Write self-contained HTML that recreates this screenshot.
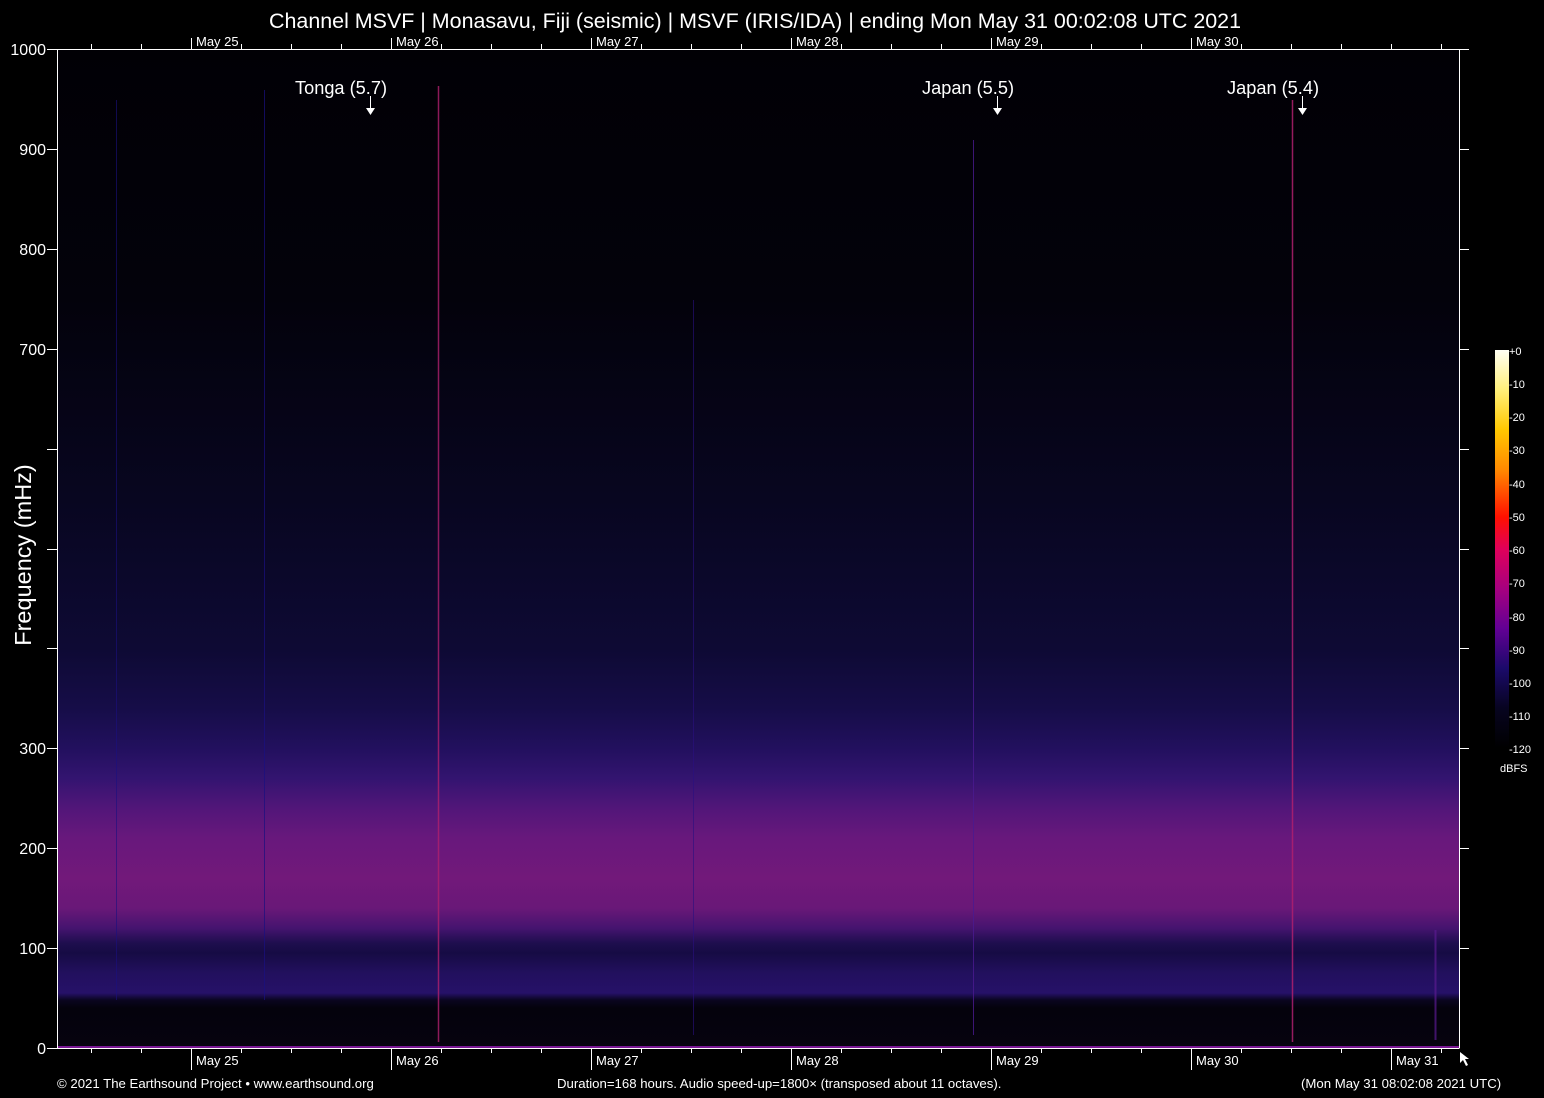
<!DOCTYPE html>
<html><head><meta charset="utf-8"><style>
html,body{margin:0;padding:0;background:#000;width:1544px;height:1098px;overflow:hidden}
svg{display:block}
text{font-family:"Liberation Sans",Arial,sans-serif;fill:#fff}
</style></head><body>
<svg width="1544" height="1098" viewBox="0 0 1544 1098" xmlns="http://www.w3.org/2000/svg">
<defs>
<linearGradient id="spec" x1="0" y1="49" x2="0" y2="1048" gradientUnits="userSpaceOnUse">
<stop offset="0" stop-color="#010005"/>
<stop offset="0.25" stop-color="#03020b"/>
<stop offset="0.45" stop-color="#080620"/>
<stop offset="0.6" stop-color="#0e0a34"/>
<stop offset="0.66" stop-color="#160d48"/>
<stop offset="0.7" stop-color="#22105e"/>
<stop offset="0.73" stop-color="#331470"/>
<stop offset="0.76" stop-color="#521679"/>
<stop offset="0.79" stop-color="#68187c"/>
<stop offset="0.83" stop-color="#72197a"/>
<stop offset="0.86" stop-color="#691878"/>
<stop offset="0.88" stop-color="#45146f"/>
<stop offset="0.895" stop-color="#1e0e4e"/>
<stop offset="0.905" stop-color="#160b44"/>
<stop offset="0.925" stop-color="#22105e"/>
<stop offset="0.945" stop-color="#261168"/>
<stop offset="0.952" stop-color="#0a0520"/>
<stop offset="0.96" stop-color="#04020c"/>
<stop offset="1" stop-color="#06030f"/>
</linearGradient>
<linearGradient id="cb" x1="0" y1="350" x2="0" y2="748" gradientUnits="userSpaceOnUse">
<stop offset="0" stop-color="#fffff4"/>
<stop offset="0.1" stop-color="#fff07a"/>
<stop offset="0.2" stop-color="#ffc800"/>
<stop offset="0.3" stop-color="#ff8a00"/>
<stop offset="0.42" stop-color="#ff1000"/>
<stop offset="0.5" stop-color="#e0005a"/>
<stop offset="0.6" stop-color="#a6007f"/>
<stop offset="0.7" stop-color="#620094"/>
<stop offset="0.8" stop-color="#1b0a6a"/>
<stop offset="0.9" stop-color="#070420"/>
<stop offset="1" stop-color="#000000"/>
</linearGradient>
</defs>
<rect x="57" y="49" width="1402" height="999" fill="url(#spec)"/>
<!-- event lines -->
<line x1="438.5" y1="86" x2="438.5" y2="1042" stroke="#b0206e" stroke-width="1.5" opacity="0.8"/>
<line x1="1292.5" y1="100" x2="1292.5" y2="1042" stroke="#b0206e" stroke-width="1.5" opacity="0.85"/>
<line x1="973.5" y1="140" x2="973.5" y2="1035" stroke="#4a1a90" stroke-width="1" opacity="0.8"/>
<line x1="264.5" y1="90" x2="264.5" y2="1000" stroke="#1a1080" stroke-width="1" opacity="0.7"/>
<line x1="116.5" y1="100" x2="116.5" y2="1000" stroke="#1a1080" stroke-width="1" opacity="0.6"/>
<line x1="693.5" y1="300" x2="693.5" y2="1035" stroke="#2a1080" stroke-width="1" opacity="0.6"/>
<line x1="1435.5" y1="930" x2="1435.5" y2="1040" stroke="#5a1a90" stroke-width="2" opacity="0.7"/>
<line x1="57" y1="1047" x2="1459" y2="1047" stroke="#a020c0" stroke-width="1.5"/>
<!-- axes -->
<g stroke="#fff" stroke-width="1" fill="none">
<path d="M57.5 49V1048.5M1459.5 49V1048.5M57 49.5H1469M47 1048.5H1459"/>
<path d="M47 948.5h10M47 848.5h10M47 748.5h10M47 648.5h10M47 549.5h10M47 449.5h10M47 349.5h10M47 249.5h10M47 149.5h10M47 49.5h10"/>
<path d="M1459 948.5h10M1459 848.5h10M1459 748.5h10M1459 648.5h10M1459 549.5h10M1459 449.5h10M1459 349.5h10M1459 249.5h10M1459 149.5h10"/>
<path d="M91.5 1048v5M141.5 1048v5M241.5 1048v5M291.5 1048v5M341.5 1048v5M441.5 1048v5M491.5 1048v5M541.5 1048v5M641.5 1048v5M691.5 1048v5M741.5 1048v5M841.5 1048v5M891.5 1048v5M941.5 1048v5M1041.5 1048v5M1091.5 1048v5M1141.5 1048v5M1241.5 1048v5M1291.5 1048v5M1341.5 1048v5M1441.5 1048v5"/>
<path d="M191.5 1048v22M391.5 1048v22M591.5 1048v22M791.5 1048v22M991.5 1048v22M1191.5 1048v22M1391.5 1048v22"/>
<path d="M91.5 49v-5M141.5 49v-5M241.5 49v-5M291.5 49v-5M341.5 49v-5M441.5 49v-5M491.5 49v-5M541.5 49v-5M641.5 49v-5M691.5 49v-5M741.5 49v-5M841.5 49v-5M891.5 49v-5M941.5 49v-5M1041.5 49v-5M1091.5 49v-5M1141.5 49v-5M1241.5 49v-5M1291.5 49v-5M1341.5 49v-5M1391.5 49v-5M1441.5 49v-5"/>
<path d="M191.5 49v-11M391.5 49v-11M591.5 49v-11M791.5 49v-11M991.5 49v-11M1191.5 49v-11"/>
<path d="M370.5 96v12M997.5 96v12M1302.5 96v12"/>
</g>
<g fill="#fff">
<path d="M366 108h9l-4.5 7z"/><path d="M993 108h9l-4.5 7z"/><path d="M1298 108h9l-4.5 7z"/>
<path d="M1460 1052l0 11 3-3 3 6 2-1-3-6 4 0z"/>
</g>
<text x="755" y="28" font-size="21.5" text-anchor="middle" textLength="972" lengthAdjust="spacingAndGlyphs">Channel MSVF | Monasavu, Fiji (seismic) | MSVF (IRIS/IDA) | ending Mon May 31 00:02:08 UTC 2021</text>
<g font-size="16" text-anchor="end">
<text x="46" y="55">1000</text><text x="46" y="155">900</text><text x="46" y="255">800</text><text x="46" y="355">700</text>
<text x="46" y="754">300</text><text x="46" y="854">200</text><text x="46" y="954">100</text><text x="46" y="1054">0</text>
</g>
<text transform="translate(31,555) rotate(-90)" font-size="23.5" text-anchor="middle">Frequency (mHz)</text>
<g font-size="13">
<text x="196" y="46">May 25</text><text x="396" y="46">May 26</text><text x="596" y="46">May 27</text><text x="796" y="46">May 28</text><text x="996" y="46">May 29</text><text x="1196" y="46">May 30</text>
<text x="196" y="1065">May 25</text><text x="396" y="1065">May 26</text><text x="596" y="1065">May 27</text><text x="796" y="1065">May 28</text><text x="996" y="1065">May 29</text><text x="1196" y="1065">May 30</text><text x="1396" y="1065">May 31</text>
</g>
<g font-size="18.2">
<text x="295" y="94">Tonga (5.7)</text><text x="922" y="94">Japan (5.5)</text><text x="1227" y="94">Japan (5.4)</text>
</g>
<g font-size="13.2">
<text x="57" y="1088">© 2021 The Earthsound Project • www.earthsound.org</text>
<text x="557" y="1088">Duration=168 hours. Audio speed-up=1800× (transposed about 11 octaves).</text>
<text x="1301" y="1088">(Mon May 31 08:02:08 2021 UTC)</text>
</g>
<rect x="1495" y="350" width="14" height="398" fill="url(#cb)"/>
<g font-size="11">
<text x="1509" y="355">+0</text><text x="1509" y="388">-10</text><text x="1509" y="421">-20</text><text x="1509" y="454">-30</text><text x="1509" y="488">-40</text><text x="1509" y="521">-50</text><text x="1509" y="554">-60</text><text x="1509" y="587">-70</text><text x="1509" y="621">-80</text><text x="1509" y="654">-90</text><text x="1509" y="687">-100</text><text x="1509" y="720">-110</text><text x="1509" y="753">-120</text>
<text x="1500" y="772">dBFS</text>
</g>
</svg>
</body></html>
